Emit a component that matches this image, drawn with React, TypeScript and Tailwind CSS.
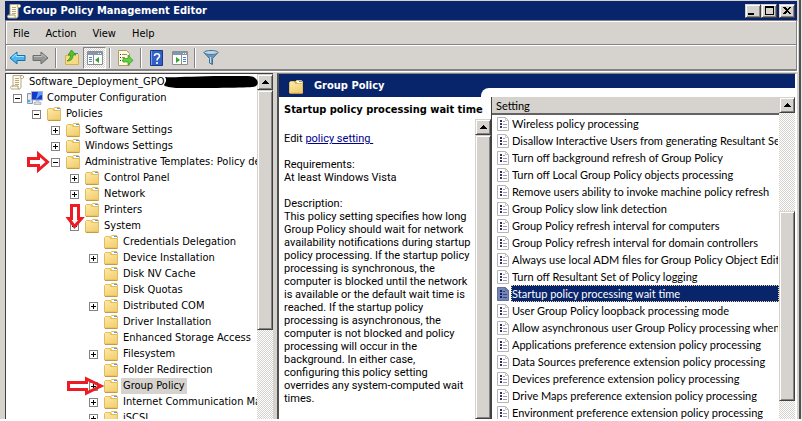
import { ReactNode } from "react";

type TreeItem = {
  label: string;
  level: number;
  toggle?: "+" | "-";
  icon?: "computer";
  selected?: boolean;
  mark?: "right" | "long" | "down";
};

const tree: TreeItem[] = [
  { label: "Computer Configuration", level: 1, toggle: "-", icon: "computer" },
  { label: "Policies", level: 2, toggle: "-" },
  { label: "Software Settings", level: 3, toggle: "+" },
  { label: "Windows Settings", level: 3, toggle: "+" },
  { label: "Administrative Templates: Policy de", level: 3, toggle: "-", mark: "right" },
  { label: "Control Panel", level: 4, toggle: "+" },
  { label: "Network", level: 4, toggle: "+" },
  { label: "Printers", level: 4 },
  { label: "System", level: 4, toggle: "-", mark: "down" },
  { label: "Credentials Delegation", level: 5 },
  { label: "Device Installation", level: 5, toggle: "+" },
  { label: "Disk NV Cache", level: 5 },
  { label: "Disk Quotas", level: 5 },
  { label: "Distributed COM", level: 5, toggle: "+" },
  { label: "Driver Installation", level: 5 },
  { label: "Enhanced Storage Access", level: 5 },
  { label: "Filesystem", level: 5, toggle: "+" },
  { label: "Folder Redirection", level: 5 },
  { label: "Group Policy", level: 5, toggle: "+", selected: true, mark: "long" },
  { label: "Internet Communication Ma", level: 5, toggle: "+" },
  { label: "iSCSI", level: 5, toggle: "+" },
];

const settings = [
  "Wireless policy processing",
  "Disallow Interactive Users from generating Resultant Se",
  "Turn off background refresh of Group Policy",
  "Turn off Local Group Policy objects processing",
  "Remove users ability to invoke machine policy refresh",
  "Group Policy slow link detection",
  "Group Policy refresh interval for computers",
  "Group Policy refresh interval for domain controllers",
  "Always use local ADM files for Group Policy Object Edito",
  "Turn off Resultant Set of Policy logging",
  "Startup policy processing wait time",
  "User Group Policy loopback processing mode",
  "Allow asynchronous user Group Policy processing when",
  "Applications preference extension policy processing",
  "Data Sources preference extension policy processing",
  "Devices preference extension policy processing",
  "Drive Maps preference extension policy processing",
  "Environment preference extension policy processing",
];

const description = [
  "This policy setting specifies how long",
  "Group Policy should wait for network",
  "availability notifications during startup",
  "policy processing. If the startup policy",
  "processing is synchronous, the",
  "computer is blocked until the network",
  "is available or the default wait time is",
  "reached. If the startup policy",
  "processing is asynchronous, the",
  "computer is not blocked and policy",
  "processing will occur in the",
  "background. In either case,",
  "configuring this policy setting",
  "overrides any system-computed wait",
  "times.",
];

const indent = ["pl-[3px]", "pl-[7px]", "pl-[26px]", "pl-[45px]", "pl-[64px]", "pl-[83px]"];

const raised =
  "bg-[#d6d3ce] border border-t-[#d6d3ce] border-l-[#d6d3ce] border-r-[#424142] border-b-[#424142] shadow-[inset_1px_1px_0_#fff,inset_-1px_-1px_0_#848284]";

const dither = "bg-[repeating-conic-gradient(#ffffff_0_25%,#d6d3ce_0_50%)] bg-[length:2px_2px]";

function Folder() {
  return (
    <svg width="16" height="16" viewBox="0 0 16 16" className="shrink-0">
      <defs>
        <linearGradient id="folder" x1="0" y1="0" x2="0.6" y2="1">
          <stop offset="0" stopColor="#ffeba8" />
          <stop offset="1" stopColor="#f2cf72" />
        </linearGradient>
      </defs>
      <path d="M7.500 3.500V2.500l1-1h5l1 1v3z" fill="#ffe794" stroke="#e3bc5c" />
      <path d="M9 2h5v2H9z" fill="#fff" />
      <path d="M11 2h3v1h-3z" fill="#4a9ee7" />
      <path d="M1.500 3.500l1-1h4l1 2h7v9.500h-13z" fill="url(#folder)" stroke="#e3bc5c" />
      <path d="M2 14.500h12.500" fill="none" stroke="#c69a42" />
    </svg>
  );
}

function Scroll() {
  return (
    <svg width="16" height="16" viewBox="0 0 16 16" className="shrink-0">
      <path d="M4 1.500h9.500c1.500 0 1.500 3 0 3H12v8.500c0 1.500-1 2-2 2H3c-2 0-2-3 0-3h1V3z" fill="#fffbe7" stroke="#b5aa8b" />
      <path d="M12 4.500c-1 0-1-3 1-3M3 12h6c0 2 0 3 1.500 3" fill="none" stroke="#a5997b" />
      <path d="M6 4.500h4M6 6.500h4M6 8.500h4M6 10.500h4" stroke="#b5a684" />
    </svg>
  );
}

function Computer() {
  return (
    <svg width="16" height="16" viewBox="0 0 16 16" className="shrink-0">
      <path d="M.5 3.500h5v10h-5z" fill="#d6dbe3" stroke="#8c96a5" />
      <path d="M1 6h4M1 8h4" stroke="#fff" />
      <path d="M1 10h2v2H1z" fill="#29b5ff" />
      <path d="M4.500 1.500h11v8.500h-11z" fill="#1838c6" stroke="#a5b2ce" />
      <path d="M11 2h4v3c-3 0-3 3-6 4z" fill="#5a9eff" />
      <path d="M9 10.500h3v2h2v2H7v-2h2z" fill="#d6dbe3" stroke="#949ead" strokeWidth=".6" />
    </svg>
  );
}

function Setting({ selected }: { selected?: boolean }) {
  return (
    <svg width="15" height="16" viewBox="0 0 15 16" className="shrink-0">
      <path d="M1.500 1.500h8l3 3v10h-11z" fill={selected ? "#7386b5" : "#fff"} stroke={selected ? "#63719c" : "#b5b6b5"} />
      <path d="M9.500 1.500v3h3" fill="none" stroke={selected ? "#63719c" : "#c6c7c6"} />
      <path d="M4 4h2v2H4zM4 7h2v2H4zM4 10h2v2H4z" fill={selected ? "#102063" : "#31305a"} />
      <path d="M7 5.500h2M7 8.500h4M7 11.500h4" stroke={selected ? "#31457b" : "#9c96bd"} />
    </svg>
  );
}

function Caret() {
  return (
    <svg width="7" height="4" viewBox="0 0 7 4" shapeRendering="crispEdges">
      <path d="M3 0h1v1h1v1h1v1h1v1H0V3h1V2h1V1h1z" />
    </svg>
  );
}

function ScrollBar({ label, children }: { label: string; children: ReactNode }) {
  return (
    <div className={"flex w-4 shrink-0 flex-col " + dither}>
      <button aria-label={label} className={"flex h-4 w-4 shrink-0 items-center justify-center " + raised}>
        <Caret />
      </button>
      <div className="min-h-0 flex-1">{children}</div>
    </div>
  );
}

function Mark({ kind }: { kind: "right" | "long" | "down" }) {
  if (kind === "right")
    return (
      <svg width="24" height="24" viewBox="0 0 24 24" className="absolute -top-1 left-[20px]">
        <path d="M2.500 8.500h10V4l9 8-9 8v-4.500h-10z" fill="#fff" stroke="#ed1c24" strokeWidth="3" />
      </svg>
    );
  if (kind === "long")
    return (
      <svg width="40" height="24" viewBox="0 0 40 24" className="absolute -top-1 left-[60px]">
        <path d="M2.500 8.500h18V5l14.500 7-14.500 7v-3.500h-18z" fill="none" stroke="#ed1c24" strokeWidth="3" />
      </svg>
    );
  return (
    <svg width="20" height="28" viewBox="0 0 20 28" className="absolute -top-[15px] left-[59px]">
      <path d="M6.500 2.500h7v13h3l-7 8-6-8h3z" fill="#fff" stroke="#ed1c24" strokeWidth="3" />
    </svg>
  );
}

function Toggle({ sign }: { sign?: "+" | "-" }) {
  if (!sign) return <span className="w-[9px] shrink-0" />;
  return (
    <button aria-label={sign === "+" ? "Expand" : "Collapse"} className="shrink-0">
      <svg width="9" height="9" viewBox="0 0 9 9" shapeRendering="crispEdges">
        <path d="M.5.5h8v8h-8z" fill="#fff" stroke="#848284" />
        <path d={sign === "+" ? "M2 4.500h5M4.500 2v5" : "M2 4.500h5"} stroke="#000" />
      </svg>
    </button>
  );
}

function Separator() {
  return <span className="mx-[3px] h-5 w-[2px] border-l border-l-[#848284] border-r border-r-white" />;
}

function ToolButton({ label, pressed, children }: { label: string; pressed?: boolean; children: ReactNode }) {
  return (
    <button
      aria-label={label}
      className={
        "flex h-[22px] w-[23px] shrink-0 items-center justify-center " +
        (pressed ? "border border-t-[#848284] border-l-[#848284] border-r-white border-b-white " + dither : "")
      }
    >
      {children}
    </button>
  );
}

function PaneIcon({ flip }: { flip?: boolean }) {
  return (
    <svg width="16" height="14" viewBox="0 0 16 14">
      <path d="M.5.5h15v13H.5z" fill="#fff" stroke="#8c8e94" />
      <path d="M1 1h14v3H1z" fill="#8496ad" />
      <path d="M11 2h1v1h-1zM13 2h1v1h-1z" fill="#fff" />
      <path d={flip ? "M9.500 4v9.500" : "M6.500 4v9.500"} stroke="#8c8e94" />
      <path d={flip ? "M11 6.500h3M11 8.500h3M11 10.500h3" : "M2 6.500h3M2 8.500h3M2 10.500h3"} stroke="#4a82c6" />
      <path d={flip ? "M4 6l4 3-4 3z" : "M12 6v6L8 9z"} fill="#31a629" />
    </svg>
  );
}

function Toolbar() {
  return (
    <div className="flex h-[25px] items-center border-b border-b-[#848284] border-t border-t-white">
      <ToolButton label="Back">
        <svg width="17" height="14" viewBox="0 0 17 14">
          <path d="M1 7l7-6v3.500h8v5H8V13z" fill="#4ab6ef" stroke="#1871ad" />
          <path d="M3 6.500l4-3.500v2.500h8" fill="none" stroke="#a5e3ff" />
        </svg>
      </ToolButton>
      <ToolButton label="Forward">
        <svg width="17" height="14" viewBox="0 0 17 14">
          <path d="M16 7L9 1v3.500H1v5h8V13z" fill="#949694" stroke="#6b6d6b" />
          <path d="M2 5.500h8V3l4 3.500" fill="none" stroke="#bdbebd" />
        </svg>
      </ToolButton>
      <Separator />
      <ToolButton label="Up one level">
        <svg width="16" height="17" viewBox="0 0 16 17">
          <path d="M1.500 6.500h5l1 1.500V4.500h6l1 1V15.500h-13z" fill="#f7db84" stroke="#d6ae52" />
          <path d="M10 4h4v1h-4z" fill="#298ede" />
          <path d="M3 12c4 0 6-2 6-6h3L7.500 1 4 6h2.500c0 3-1 4-3.500 6z" fill="#52c329" stroke="#298a18" strokeWidth=".7" />
        </svg>
      </ToolButton>
      <ToolButton label="Show console tree" pressed>
        <PaneIcon />
      </ToolButton>
      <Separator />
      <ToolButton label="Export list">
        <svg width="17" height="16" viewBox="0 0 17 16">
          <path d="M1.500.5h8l3 3v12h-11z" fill="#fffbde" stroke="#ad9e6b" />
          <path d="M3 4.500h1M3 7.500h1M3 10.500h1" stroke="#31305a" />
          <path d="M5 4.500h5M5 7.500h3M5 10.500h3" stroke="#948e73" />
          <path d="M6 8.500h5V5l5 5.500-5 4.500v-3H6z" fill="#63cf42" stroke="#319621" strokeWidth=".7" />
        </svg>
      </ToolButton>
      <Separator />
      <ToolButton label="Help">
        <svg width="13" height="16" viewBox="0 0 13 16">
          <path d="M.5.500h12v15H.5z" fill="#3161c6" stroke="#18388c" />
          <path d="M1.500 1v14" stroke="#7ba2e7" />
          <path d="M4.500 6c0-3 5-3 5 0 0 2-2.500 2-2.500 4.500M7 12v2" fill="none" stroke="#fff" strokeWidth="1.600" />
        </svg>
      </ToolButton>
      <ToolButton label="Show action pane">
        <PaneIcon flip />
      </ToolButton>
      <Separator />
      <ToolButton label="Filter">
        <svg width="16" height="15" viewBox="0 0 16 15">
          <path d="M1 2.500l5.500 6V13l3 1.500v-6L15 2.500z" fill="#6b96bd" stroke="#426d94" />
          <ellipse cx="8" cy="2.500" rx="7" ry="2" fill="#bdd7e7" stroke="#4a759c" />
          <path d="M7.500 7v6" stroke="#bddbef" />
        </svg>
      </ToolButton>
    </div>
  );
}

function TreePane() {
  return (
    <nav className="flex w-[268px] shrink-0 border-t border-l border-[#424142] bg-white">
      <ul className="min-w-0 flex-1 overflow-hidden whitespace-nowrap">
        <li className={"relative flex h-4 items-center gap-1 " + indent[0]}>
          <Scroll />
          <span>Software_Deployment_GPO</span>
        </li>
        {tree.map((item) => (
          <li key={item.label} className={"relative flex h-4 items-center " + indent[item.level]}>
            <Toggle sign={item.toggle} />
            <span className="ml-[5px] shrink-0">{item.icon === "computer" ? <Computer /> : <Folder />}</span>
            <span className={"ml-[2px] px-[2px] leading-4 " + (item.selected ? "bg-[#d6d3ce]" : "")}>{item.label}</span>
            {item.mark && <Mark kind={item.mark} />}
          </li>
        ))}
      </ul>
      <div className="relative flex">
        <ScrollBar label="Scroll tree up">
          <div className={"h-[73%] " + raised} />
        </ScrollBar>
        {/* redacted domain name */}
        <svg width="96" height="14" viewBox="0 0 96 14" className="absolute top-[1px] right-[14px]">
          <path d="M2 2C10 3 30 1 60 1s30-1 34 4c2 4 0 7-5 7-8 1-60 1-76 1C8 12 2 12 1 10c2-3 3-5 1-8z" fill="#000" />
        </svg>
      </div>
    </nav>
  );
}

function DetailPane() {
  return (
    <section className="flex w-[212px] shrink-0 flex-col whitespace-nowrap">
      <h2 className="h-[22px] pt-[5px] pl-[5px] leading-[15px] font-bold">Startup policy processing wait time</h2>
      <div className="flex min-h-0 flex-1">
        <div className="min-w-0 flex-1 pt-[13px] pl-[5px] font-['Roboto',sans-serif] leading-[13px]">
          <p>
            Edit{" "}
            <a href="#setting" className="text-[#00008c] underline">
              policy setting&nbsp;
            </a>
          </p>
          <p className="mt-[13px]">Requirements:</p>
          <p>At least Windows Vista</p>
          <p className="mt-[13px]">Description:</p>
          {description.map((line) => (
            <p key={line}>{line}</p>
          ))}
        </div>
        <ScrollBar label="Scroll description up">
          <div className={"h-full " + raised} />
        </ScrollBar>
      </div>
    </section>
  );
}

function SettingsPane() {
  return (
    <section className="flex min-w-0 flex-1 font-['Lato',sans-serif]">
      <div className="min-w-0 flex-1 overflow-hidden border-l border-l-[#424142]">
        <table className="w-full table-fixed border-collapse whitespace-nowrap">
          <thead>
            <tr className="h-[17px]">
              <th className="border-b-2 border-b-[#636163] bg-[#d6d3ce] p-0 pl-1 text-left leading-[15px] font-normal">
                Setting
              </th>
            </tr>
          </thead>
          <tbody>
            {settings.map((name) => {
              const selected = name === "Startup policy processing wait time";
              return (
                <tr key={name}>
                  <td className="p-0">
                    <div className="flex h-[17px] items-center pl-1">
                      <Setting selected={selected} />
                      <span
                        className={
                          "min-w-0 flex-1 overflow-hidden leading-[15px] " +
                          (selected ? "border border-dotted border-[#f7db94] bg-[#08246b] text-white" : "border border-transparent")
                        }
                      >
                        {name}
                      </span>
                    </div>
                  </td>
                </tr>
              );
            })}
          </tbody>
        </table>
      </div>
      <ScrollBar label="Scroll settings up">
        <div className="h-[32%]" />
        <div className={"h-[62%] " + raised} />
      </ScrollBar>
    </section>
  );
}

function App() {
  return (
    <div className="flex h-screen flex-col overflow-hidden border-r border-b-2 border-r-[#e7e7e7] border-b-white bg-white font-['DejaVu_Sans_Condensed','DejaVu_Sans',sans-serif] text-[11px] text-black">
      <div className="flex min-h-0 flex-1 flex-col border-r-2 border-r-[#525152] bg-[#d6d3ce] pt-[1px] pr-[2px] pl-[5px]">
        <header className="flex h-[19px] shrink-0 items-center bg-[#08246b] pr-[2px] pl-[1px] text-white">
          <Scroll />
          <h1 className="ml-[1px] flex-1 pt-[2px] font-bold">Group Policy Management Editor</h1>
          <button aria-label="Minimize" className={"flex h-[14px] w-4 items-end justify-center pb-[2px] " + raised}>
            <span className="mr-1 h-[2px] w-[6px] bg-black" />
          </button>
          <button aria-label="Maximize" className={"flex h-[14px] w-4 items-center justify-center " + raised}>
            <span className="h-[9px] w-[9px] border border-t-2 border-black" />
          </button>
          <button aria-label="Close" className={"ml-[2px] flex h-[14px] w-4 items-center justify-center " + raised}>
            <svg width="8" height="7" viewBox="0 0 8 7" shapeRendering="crispEdges">
              <path d="M0 0h2l2 2 2-2h2L5 3.500 8 7H6L4 5 2 7H0l3-3.500z" />
            </svg>
          </button>
        </header>
        <div className="shrink-0 border border-[#848284] shadow-[inset_1px_1px_0_#fff,1px_1px_0_#fff]">
          <nav className="flex h-6 items-center gap-4 border-b border-b-[#848284] pt-[3px] pl-[7px]">
            <button>File</button>
            <button>Action</button>
            <button>View</button>
            <button>Help</button>
          </nav>
          <Toolbar />
        </div>
        <main className="mt-[2px] flex min-h-0 flex-1 gap-[4px]">
          <TreePane />
          <div className="flex min-w-0 flex-1 flex-col border-t border-r-2 border-l-2 border-t-[#848284] border-r-white border-l-[#525152] bg-white">
            <div className="flex h-[23px] shrink-0 items-end bg-[#08246b]">
              <div className="flex h-full w-[202px] shrink-0 items-center gap-[10px] pt-[2px] pl-[9px] text-white">
                <Folder />
                <h2 className="font-bold">Group Policy</h2>
              </div>
              <div className="h-[9px] flex-1 rounded-tl-lg bg-white" />
            </div>
            <div className="flex min-h-0 flex-1">
              <DetailPane />
              <SettingsPane />
            </div>
          </div>
        </main>
      </div>
    </div>
  );
}

export default App;
